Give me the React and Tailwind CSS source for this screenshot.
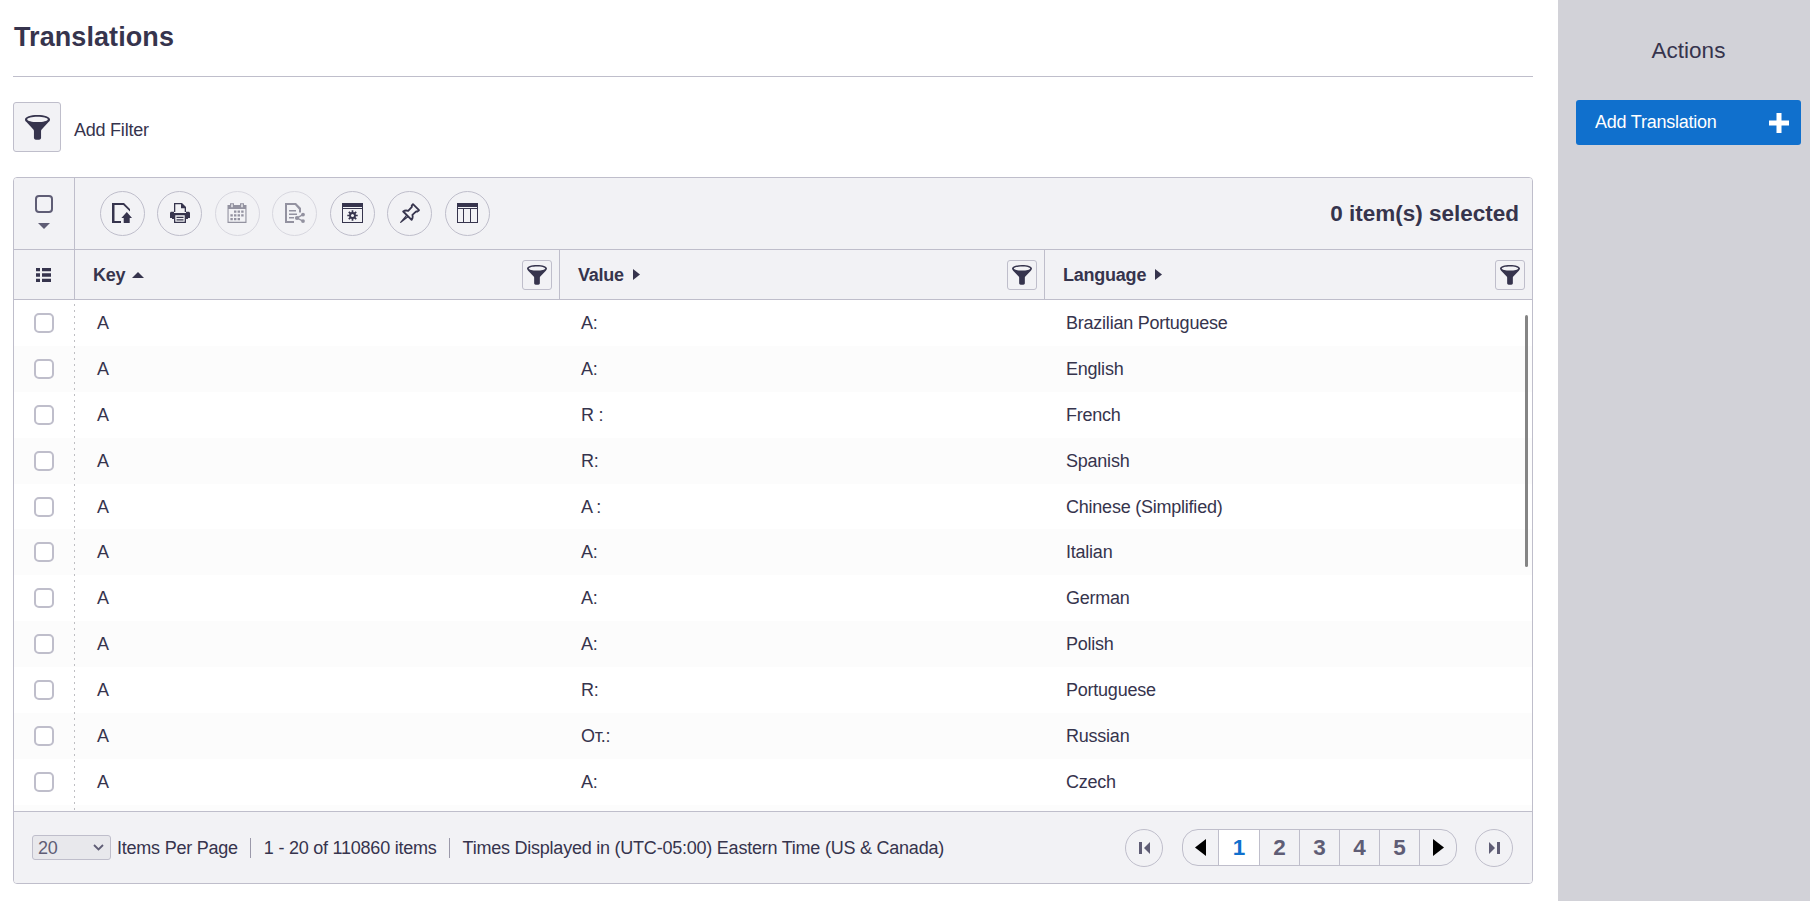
import clsx from "clsx";

const rows = [
  { key: "A", value: "A:", language: "Brazilian Portuguese" },
  { key: "A", value: "A:", language: "English" },
  { key: "A", value: "R :", language: "French" },
  { key: "A", value: "R:", language: "Spanish" },
  { key: "A", value: "A\u2009:", language: "Chinese (Simplified)" },
  { key: "A", value: "A:", language: "Italian" },
  { key: "A", value: "A:", language: "German" },
  { key: "A", value: "A:", language: "Polish" },
  { key: "A", value: "R:", language: "Portuguese" },
  { key: "A", value: "От.:", language: "Russian" },
  { key: "A", value: "A:", language: "Czech" },
  { key: "", value: "", language: "" },
];

function FunnelIcon({ className }) {
  return (
    <svg viewBox="0 0 26 26" className={className} fill="currentColor">
      <path
        fillRule="evenodd"
        d="M13 0C5.500 0 0 2 0 4.600c0 1 .6 1.900 1.500 2.800l7.200 7.600c.4.500.6 1 .6 1.600v7.200c0 1.400 1.600 2 3.700 2s3.700-.6 3.700-2v-7.200c0-.6.2-1.100.6-1.600l7.200-7.600c.9-.9 1.500-1.800 1.500-2.800C26 2 20.500 0 13 0zm0 1.900c5.800 0 10.700 1.200 10.700 2.700S18.800 7.300 13 7.300 2.300 6.100 2.300 4.600 7.200 1.900 13 1.900z"
      />
    </svg>
  );
}

function ExportIcon() {
  return (
    <svg viewBox="0 0 20 20" className="size-5" fill="currentColor">
      <path d="M0 0h12l6 6v2.500L11.300 2H2.500v16H9v2H0z" />
      <path d="M14.800 9l5.200 6h-2.300v5h-6v-5H9.400z" />
    </svg>
  );
}

function PrinterIcon() {
  return (
    <svg viewBox="0 0 20 20" className="size-5" fill="currentColor">
      <path fillRule="evenodd" d="M4 0h8l4 4v5h-1.300V5.300H11V1.300H5.300V9H4z" />
      <path
        fillRule="evenodd"
        d="M1.500 8.800H4V10h12V8.800h2.500c.9 0 1.500.6 1.500 1.500V15h-2v1h-2v4H4v-4H2v-1H0v-4.700c0-.9.600-1.500 1.500-1.500zM5.300 12.300v6.400h9.400v-6.400zM6.500 13.700h7V15h-7zm0 2.600h7v1.300h-7z"
      />
    </svg>
  );
}

function CalendarIcon() {
  return (
    <svg viewBox="0 0 20 20" className="size-5" fill="currentColor">
      <path
        fillRule="evenodd"
        d="M.5 2H3V.2h4V2h6V.2h4V2h2.500v18H.5zM4.300 1.300v3h1.400v-3zm10 0v3h1.400v-3zM1.600 6v12.800h16.800V6z"
      />
      <path d="M7 7.500h2.400v2.300H7zm3.600 0H13v2.300h-2.400zm3.600 0h2.400v2.300h-2.400zM3.400 11.200h2.400v2.300H3.400zm3.600 0h2.400v2.300H7zm3.600 0H13v2.300h-2.400zm3.600 0h2.400v2.300h-2.400zM3.400 14.900h2.400v2.300H3.400zm3.600 0h2.400v2.300H7zm3.600 0H13v2.300h-2.400z" />
    </svg>
  );
}

function ShareIcon() {
  return (
    <svg viewBox="0 0 20 20" className="size-5" fill="currentColor">
      <path d="M0 0h11l5 5v4.500h-2V6.500L10 2H2v16h7v2H0z" />
      <path d="M4 7h7v1.500H4zm0 3.500h8V12H4zM4 14h5v1.500H4z" />
      <circle cx="12" cy="15" r="2.100" />
      <circle cx="18" cy="11.600" r="1.900" />
      <circle cx="18" cy="18.100" r="1.900" />
      <path d="M18 11.600L12 15l6 3.100" fill="none" stroke="currentColor" strokeWidth="1.400" />
    </svg>
  );
}

function SettingsIcon() {
  return (
    <svg viewBox="0 0 21 20" className="h-5 w-[21px]" fill="currentColor">
      <path fillRule="evenodd" d="M0 0h21v20H0zM1 4v1h19V4zM1 6v13h19V6z" />
      <path
        d="M10.500 7.300v10.400M5.300 12.500h10.400M6.800 8.800l7.400 7.400M14.200 8.800l-7.400 7.400"
        stroke="currentColor"
        strokeWidth="1.700"
      />
      <circle cx="10.500" cy="12.500" r="3.400" />
      <circle cx="10.500" cy="12.500" r="1.500" fill="#f2f2f5" />
    </svg>
  );
}

function PinIcon() {
  return (
    <svg
      viewBox="0 0 20 20"
      className="size-5"
      fill="none"
      stroke="currentColor"
      strokeWidth="1.800"
      strokeLinejoin="round"
    >
      <path d="M13 1.200l6 6-1.600 1.300-1.200-.2-3.800 3.600c.6 2 .3 3.600-.8 5L3.200 8.500c1.500-1.100 3.100-1.300 5-.6l3.700-4-.2-1.300z" />
      <path d="M6.800 12.200L.7 19.300l7.500-5.700" strokeWidth="1.300" />
    </svg>
  );
}

function ColumnsIcon() {
  return (
    <svg viewBox="0 0 21 20" className="h-5 w-[21px]" fill="currentColor">
      <path fillRule="evenodd" d="M0 0h21v20H0zM1 4v1h19V4zM1 6v13h5V6zM7 6v13h6V6zM14 6v13h6V6z" />
    </svg>
  );
}

function ListIcon() {
  return (
    <svg viewBox="0 0 15 14" className="h-3.5 w-[15px]" fill="currentColor">
      <path d="M0 0h4v3.300H0zM6 0h9v3.300H6zM0 5.300h4v3.400H0zM6 5.300h9v3.400H6zM0 10.700h4V14H0zM6 10.700h9V14H6z" />
    </svg>
  );
}

// triangle used by the sort markers and the pager
function Arrow({ dir, className }) {
  const paths = {
    up: "M5 0l5 10H0z",
    down: "M0 0h10L5 10z",
    left: "M10 0v10L0 5z",
    right: "M0 0l10 5L0 10z",
  };
  return (
    <svg viewBox="0 0 10 10" preserveAspectRatio="none" className={className} fill="currentColor">
      <path d={paths[dir]} />
    </svg>
  );
}

const tools = [
  { name: "Export", Icon: ExportIcon },
  { name: "Print", Icon: PrinterIcon },
  { name: "Schedule", Icon: CalendarIcon, disabled: true },
  { name: "Share", Icon: ShareIcon, disabled: true },
  { name: "Settings", Icon: SettingsIcon },
  { name: "Pin", Icon: PinIcon },
  { name: "Columns", Icon: ColumnsIcon },
];

function HeaderCell({ label, sorted, last }) {
  return (
    <div
      className={clsx(
        "flex items-center justify-between pl-[18px]",
        last ? "flex-1 pr-[7px]" : "w-[485px] border-r border-[#bfbecb] pr-[7px]"
      )}
    >
      <div className="flex items-center font-bold">
        {label}
        {sorted ? (
          <Arrow dir="up" className="ml-[7px] h-1.5 w-3" />
        ) : (
          <Arrow dir="right" className="ml-[9px] h-[11px] w-[7px]" />
        )}
      </div>
      <button className="flex size-[30px] items-center justify-center rounded-[3px] border border-[#bfbecb]">
        <FunnelIcon className="size-5" />
      </button>
    </div>
  );
}

function Toolbar() {
  return (
    <div className="flex h-[72px] border-b border-[#bfbecb]">
      <div className="flex w-[61px] flex-col items-center border-r border-[#bfbecb] pt-[17px]">
        <div className="size-[18px] rounded-[4px] border-2 border-[#5f5d75]"></div>
        <Arrow dir="down" className="mt-2.5 h-1.5 w-3 text-[#5f5d75]" />
      </div>
      <div className="flex flex-1 items-center justify-between pr-[13px] pl-[24.800px]">
        <div className="flex gap-[12.500px]">
          {tools.map(({ name, Icon, disabled }) => (
            <button
              key={name}
              aria-label={name}
              className={clsx(
                "flex size-[45px] items-center justify-center rounded-full border border-[#bfbecb] pb-px",
                disabled && "opacity-50"
              )}
            >
              <Icon />
            </button>
          ))}
        </div>
        <div className="text-[22.500px] font-bold tracking-normal">0 item(s) selected</div>
      </div>
    </div>
  );
}

function Row({ row, striped }) {
  return (
    <div className={clsx("flex h-[45.900px] shrink-0 items-center", striped && "bg-[#fcfcfc]")}>
      <div className="flex w-[61px] justify-center pr-px">
        <div className="size-5 rounded-[5px] border-2 border-[#bfbecb] bg-white"></div>
      </div>
      <div className="w-[484px] pl-[22px]">{row.key}</div>
      <div className="w-[485px] pl-[22px]">{row.value}</div>
      <div className="flex-1 pl-[22px]">{row.language}</div>
    </div>
  );
}

function Pager() {
  return (
    <div className="flex items-center text-[#5f5d75]">
      <button className="flex size-[38px] items-center justify-center gap-0.5 rounded-full border border-[#bfbecb]">
        <span className="h-3 w-[3px] bg-current"></span>
        <Arrow dir="left" className="h-3 w-1.5" />
      </button>
      <div className="mr-[18px] ml-[19px] flex h-[37px] overflow-hidden rounded-[16px] border border-[#bfbecb] text-[22.500px] font-bold">
        <button className="flex w-[36px] items-center justify-center border-r border-[#bfbecb] text-black">
          <Arrow dir="left" className="h-[17px] w-[11px]" />
        </button>
        <button className="w-[41px] border-r border-[#bfbecb] bg-white text-[#1070cd]">1</button>
        {[2, 3, 4, 5].map((page) => (
          <button key={page} className="w-10 border-r border-[#bfbecb]">
            {page}
          </button>
        ))}
        <button className="flex w-[36px] items-center justify-center text-black">
          <Arrow dir="right" className="h-[17px] w-[11px]" />
        </button>
      </div>
      <button className="flex size-[38px] items-center justify-center gap-0.5 rounded-full border border-[#bfbecb]">
        <Arrow dir="right" className="h-3 w-1.5" />
        <span className="h-3 w-[3px] bg-current"></span>
      </button>
    </div>
  );
}

function Footer() {
  return (
    <div className="flex h-[72px] items-center justify-between border-t border-[#bfbecb] bg-[#f2f2f5] pr-[19px] pl-[18px]">
      <div className="flex items-center">
        <div className="flex h-[25px] w-[79px] items-center justify-between rounded-[3px] border border-[#bfbecb] bg-[#e8e8ec] pr-1.5 pl-[5px] text-[#5f5d75]">
          20
          <svg viewBox="0 0 11 7" className="h-[7px] w-[11px]" fill="none" stroke="currentColor" strokeWidth="1.800">
            <path d="M1 1l4.500 4.500L10 1" />
          </svg>
        </div>
        <span className="ml-1.5">Items Per Page</span>
        <span className="mr-[13px] ml-[12px] h-5 w-px bg-[#9b99aa]"></span>
        <span>1 - 20 of 110860 items</span>
        <span className="mr-[13px] ml-[12px] h-5 w-px bg-[#9b99aa]"></span>
        <span>Times Displayed in (UTC-05:00) Eastern Time (US &amp; Canada)</span>
      </div>
      <Pager />
    </div>
  );
}

function App() {
  return (
    <div className="flex h-screen overflow-hidden bg-white font-['Liberation_Sans',Arial,sans-serif] text-[18px] leading-[22px] tracking-[-0.230px] text-[#36344d]">
      {/* MAIN */}
      <main className="flex w-[1558px] flex-col pr-[25px] pl-[13px]">
        <h1 className="flex h-[77px] items-center border-b border-[#bfbecb] pb-0.5 pl-px text-[27px] font-bold tracking-[0.080px]">
          Translations
        </h1>

        {/* FILTER */}
        <div className="mt-[25px] flex items-center">
          <button className="flex h-[50px] w-12 items-center justify-center rounded-[3px] border border-[#bfbecb] bg-[#f2f2f5]">
            <FunnelIcon className="size-[25px]" />
          </button>
          <span className="mt-1.5 ml-[13px]">Add Filter</span>
        </div>

        {/* TABLE */}
        <section className="mt-[25px] flex h-[707px] flex-col overflow-hidden rounded-[4px] border border-[#bfbecb]">
          <div className="bg-[#f2f2f5]">
            <Toolbar />
            <div className="flex h-[50px] border-b border-[#bfbecb]">
              <div className="flex w-[61px] items-center justify-center border-r border-[#bfbecb] pr-px">
                <ListIcon />
              </div>
              <HeaderCell label="Key" sorted />
              <HeaderCell label="Value" />
              <HeaderCell label="Language" last />
            </div>
          </div>

          <div className="relative flex min-h-0 flex-1 flex-col overflow-hidden">
            {rows.map((row, i) => (
              <Row key={i} row={row} striped={i % 2 === 1} />
            ))}
            <div className="absolute inset-y-0 left-[60px] w-px bg-[repeating-linear-gradient(to_bottom,transparent_0_4px,#bfbfc3_4px_6px)]"></div>
            <div className="absolute top-[15px] right-1 h-[252px] w-[3px] rounded-full bg-[#858585]"></div>
          </div>

          <Footer />
        </section>
      </main>

      {/* ACTIONS */}
      <aside className="flex-1 bg-[#d2d2d8] pr-[9px] pl-[18px]">
        <h2 className="mt-[39px] text-center text-[22.500px] leading-6 tracking-normal">Actions</h2>
        <button className="mt-[37px] flex h-[45px] w-full items-center justify-between rounded-[3px] bg-[#1070cd] pr-3 pl-[19px] text-white">
          <span className="pb-0.5">Add Translation</span>
          <svg viewBox="0 0 20 20" className="size-5" fill="currentColor">
            <path d="M7.500 0h5v7.500H20v5h-7.500V20h-5v-7.500H0v-5h7.500z" />
          </svg>
        </button>
      </aside>
    </div>
  );
}

export default App;
